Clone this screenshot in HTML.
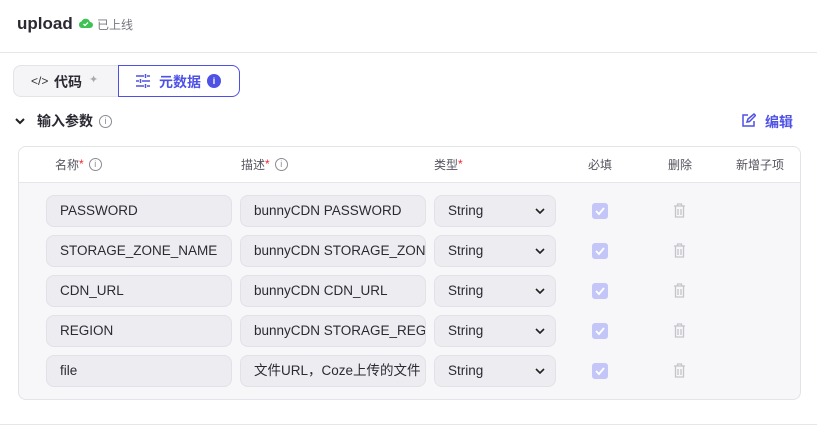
<!DOCTYPE html><html><head><meta charset="utf-8"><style>
*{box-sizing:border-box;margin:0;padding:0}
body{width:817px;height:430px;background:#fff;font-family:"Liberation Sans","Noto Sans CJK SC",sans-serif;position:relative;overflow:hidden;color:#1d1c23}
.a{position:absolute}
.inp{position:absolute;height:32px;background:#ededf1;border:1px solid #e1e1e7;border-radius:8px;font-size:13.5px;color:#2b2a33;line-height:30px;padding-left:13px;white-space:nowrap;overflow:hidden}
.hd{position:absolute;top:156px;font-size:12px;color:#55545e;display:flex;align-items:center;height:16px}
.star{color:#f5222d}
.cb{position:absolute;width:16px;height:16px;border-radius:3px;background:#c3c6f7}
.info{display:inline-block;width:13px;height:13px;border:1px solid #8a8a93;border-radius:50%;font-size:9px;line-height:11px;text-align:center;color:#8a8a93;margin-left:5px;font-weight:normal}
</style></head><body>
<div class="a" style="left:17px;top:14px;font-size:17px;font-weight:bold;color:#2b2a33">upload</div>
<svg class="a" style="left:78px;top:17px" width="15" height="12" viewBox="0 0 15 12"><path d="M4 11h8a3 3 0 0 0 0-6 4.5 4.5 0 0 0-8.5-.5A3.3 3.3 0 0 0 4 11z" fill="#3ec254"/><path d="M5.5 7l1.5 1.5 3-3" stroke="#fff" stroke-width="1.3" fill="none"/></svg>
<div class="a" style="left:97px;top:16px;font-size:12px;color:#77767f">已上线</div>
<div class="a" style="left:0;top:52px;width:817px;height:1px;background:#e6e6ea"></div>
<div class="a" style="left:13px;top:65px;width:106px;height:32px;background:#f5f5f7;border:1px solid #e3e3e8;border-radius:8px 0 0 8px"></div>
<div class="a" style="left:31px;top:74px;font-size:12px;color:#333">&lt;/&gt;</div>
<div class="a" style="left:54px;top:72px;font-size:14px;font-weight:bold;color:#2b2a33">代码</div>
<div class="a" style="left:89px;top:73px;font-size:11px;color:#aaa">✦</div>
<div class="a" style="left:118px;top:65px;width:122px;height:32px;border:1px solid #4e51e6;border-radius:0 8px 8px 0"></div>
<svg class="a" style="left:135px;top:74px" width="16" height="14" viewBox="0 0 16 14" stroke="#4e51e6" stroke-width="1.5"><path d="M1 2h8M12 2h3M1 7h3M7 7h8M1 12h8M12 12h3M10.5 0v4M5.5 5v4M10.5 10v4"/></svg>
<div class="a" style="left:159px;top:72px;font-size:14px;font-weight:bold;color:#4e51e6">元数据</div>
<div class="a" style="left:207px;top:74px;width:14px;height:14px;border-radius:50%;background:#4e51e6;color:#fff;font-size:9px;font-weight:bold;text-align:center;line-height:14px">i</div>
<svg class="a" style="left:14px;top:116px" width="12" height="10" viewBox="0 0 12 10"><path d="M2 3l4 4 4-4" stroke="#222" stroke-width="2" fill="none"/></svg>
<div class="a" style="left:37px;top:112px;height:18px;font-size:14px;font-weight:bold;color:#2b2a33;display:flex;align-items:center">输入参数<span class="info" style="margin-left:6px">i</span></div>
<svg class="a" style="left:741px;top:113px" width="15" height="15" viewBox="0 0 15 15" stroke="#4e51e6" stroke-width="1.5" fill="none"><path d="M7 2H2v11h11V8M6 9l1-3 6-5 1.5 1.5-6 6z"/></svg>
<div class="a" style="left:765px;top:112px;font-size:14px;font-weight:bold;color:#4e51e6">编辑</div>
<div class="a" style="left:18px;top:146px;width:783px;height:254px;border:1px solid #e3e3e8;border-radius:8px;background:#f7f7f9;overflow:hidden"><div style="height:36px;background:#fff;border-bottom:1px solid #e6e6ea"></div></div>
<div class="hd" style="left:55px">名称<span class="star">*</span><span class="info">i</span></div>
<div class="hd" style="left:241px">描述<span class="star">*</span><span class="info">i</span></div>
<div class="hd" style="left:434px">类型<span class="star">*</span></div>
<div class="hd" style="left:588px">必填</div>
<div class="hd" style="left:668px">删除</div>
<div class="hd" style="left:736px">新增子项</div>
<div id="rows"></div>
<div class="a" style="left:0;top:424px;width:817px;height:1px;background:#e6e6ea"></div>
<script>
var d=[["PASSWORD","bunnyCDN PASSWORD"],["STORAGE_ZONE_NAME","bunnyCDN STORAGE_ZONE_NAME"],["CDN_URL","bunnyCDN CDN_URL"],["REGION","bunnyCDN STORAGE_REGION"],["file","文件URL，Coze上传的文件"]];
var h="";d.forEach(function(r,i){var t=195+i*40;
h+='<div class="inp" style="left:46px;top:'+t+'px;width:186px">'+r[0]+'</div>';
h+='<div class="inp" style="left:240px;top:'+t+'px;width:186px">'+r[1]+'</div>';
h+='<div class="inp" style="left:434px;top:'+t+'px;width:122px">String<svg style="position:absolute;right:10px;top:12px" width="10" height="7" viewBox="0 0 10 7"><path d="M1 1l4 4 4-4" stroke="#222" stroke-width="1.6" fill="none"/></svg></div>';
h+='<div class="cb" style="left:592px;top:'+(t+8)+'px"><svg width="16" height="16" viewBox="0 0 16 16"><path d="M4 8l3 3 5-6" stroke="#fff" stroke-width="1.8" fill="none"/></svg></div>';
h+='<svg class="a" style="left:673px;top:'+(t+8)+'px" width="13" height="15" viewBox="0 0 13 15" stroke="#c4c4ca" stroke-width="1.3" fill="none"><path d="M1 3h11M4.5 3V1h4v2M2.5 3v11h8V3M5 6v6M8 6v6"/></svg>';});
document.getElementById("rows").innerHTML=h;
</script>
</body></html>
